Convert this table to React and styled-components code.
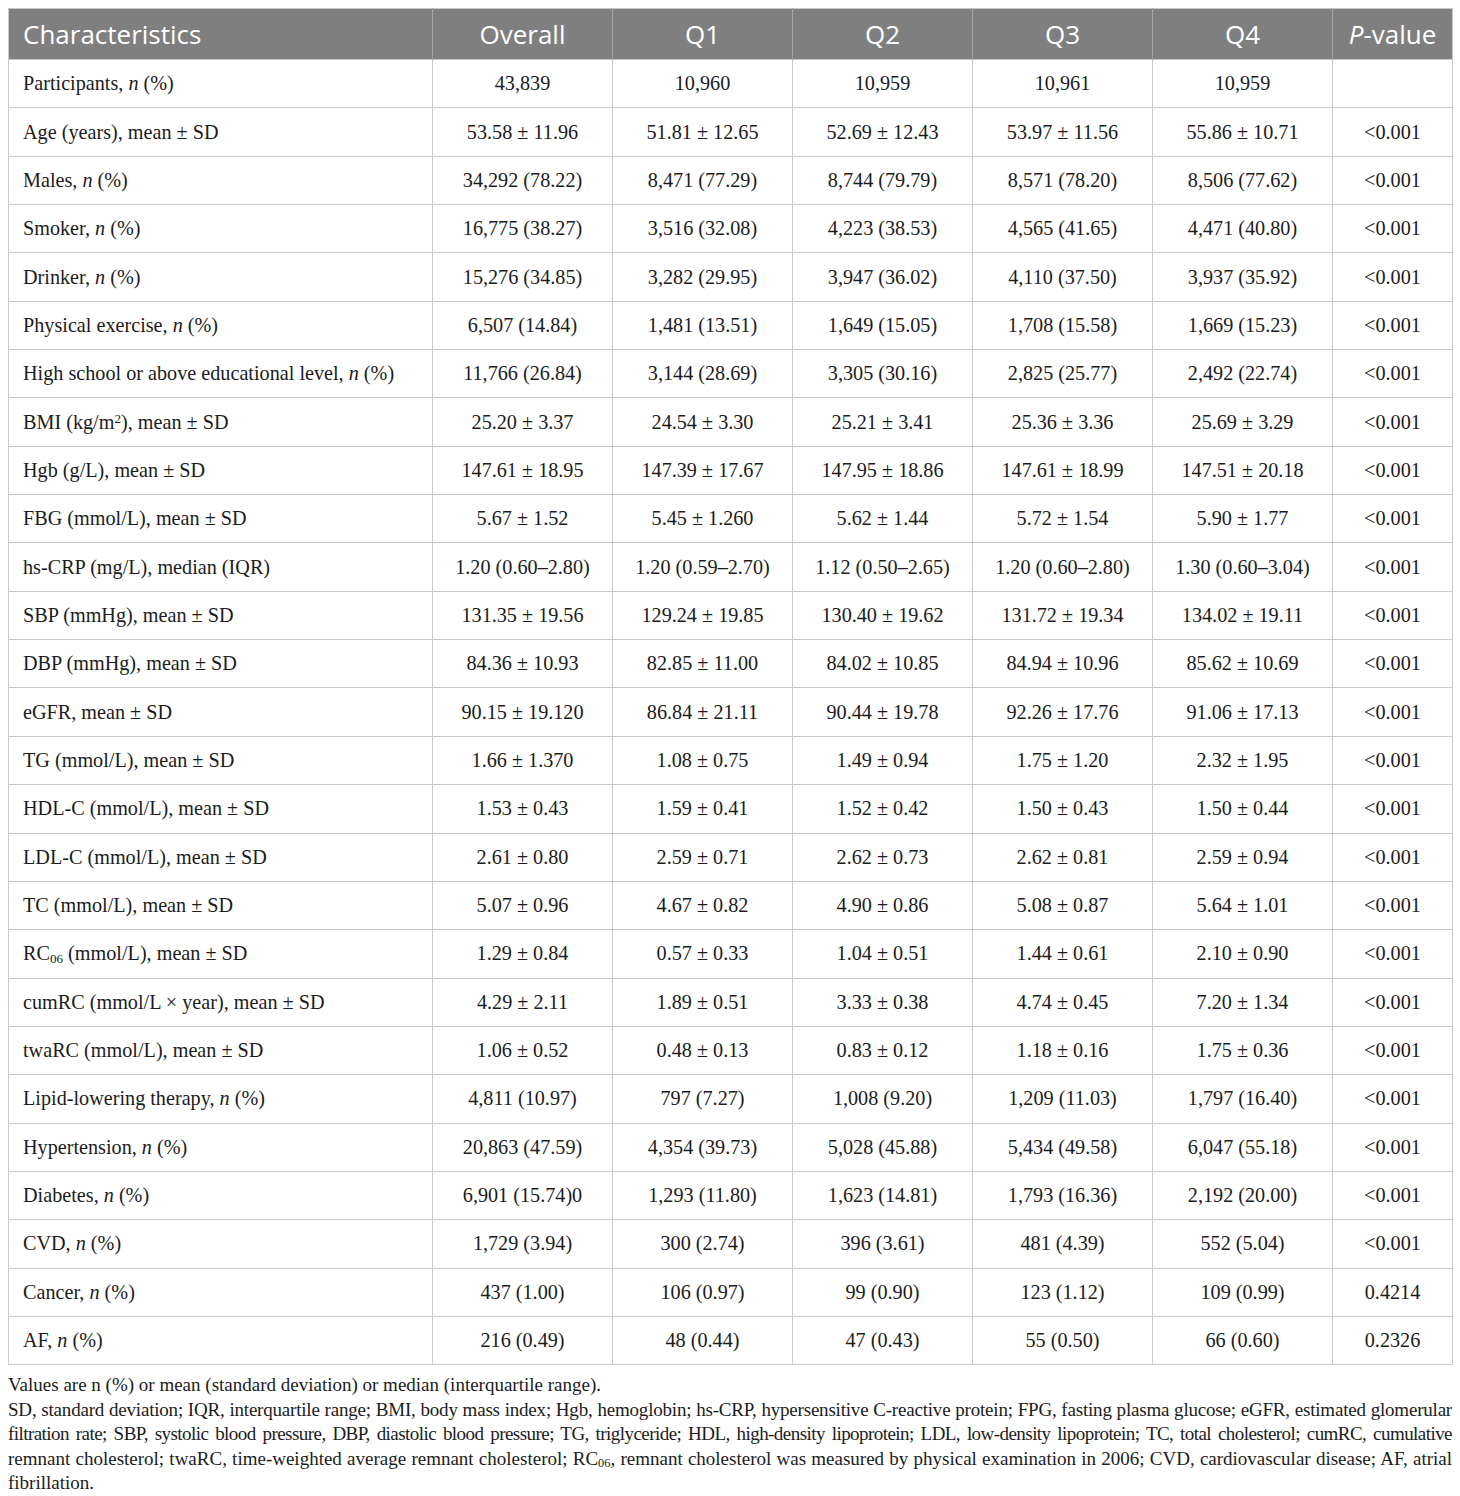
import React from "react";
import styled, { createGlobalStyle } from "styled-components";

const Global = createGlobalStyle`
  html, body { margin: 0; padding: 0; background: #fff; }
  body { font-family: "Liberation Serif", "Times New Roman", serif; color: #1c1c1c; }
`;

const Page = styled.div`
  padding: 8px;
  width: 1444px;
`;

const Table = styled.table`
  width: 1444px;
  border-collapse: collapse;
  table-layout: fixed;
  border: 1px solid #c9c9c9;
`;

const HeadCell = styled.th`
  background: #7f7f7f;
  color: #fff;
  font-family: "Open Sans", "Noto Sans", sans-serif;
  font-weight: 400;
  font-size: 26px;
  height: 51px;
  padding: 0 14px;
  text-align: ${(p) => (p.$left ? "left" : "center")};
  border-left: 1px solid #a6a6a6;
  vertical-align: middle;
  box-sizing: border-box;
  &:first-child { border-left: 1px solid #c9c9c9; }
`;

const Row = styled.tr`
  height: 48.35px;
`;

const Cell = styled.td`
  font-size: 20.2px;
  padding: 0 14px;
  text-align: ${(p) => (p.$left ? "left" : "center")};
  border: 1px solid #c9c9c9;
  vertical-align: middle;
  white-space: nowrap;
  color: #1c1c1c;
`;

const Sub = styled.sub`
  font-size: 0.65em;
  vertical-align: -0.2em;
  line-height: 0;
`;
const Sup = styled.sup`
  font-size: 0.65em;
  vertical-align: 0.45em;
  line-height: 0;
`;

const Notes = styled.div`
  margin-top: 8px;
  font-size: 19px;
  line-height: 24.5px;
  color: #1c1c1c;
`;

const NoteLine = styled.div`
  text-align: ${(p) => (p.$justify ? "justify" : "left")};
  text-align-last: ${(p) => (p.$justify ? "justify" : "left")};
  letter-spacing: ${(p) => p.$spacing || "0"};
  white-space: ${(p) => (p.$justify ? "normal" : "nowrap")};
`;

const n = <i>n</i>;

const rows = [
  [<>Participants, {n} (%)</>, "43,839", "10,960", "10,959", "10,961", "10,959", ""],
  ["Age (years), mean ± SD", "53.58 ± 11.96", "51.81 ± 12.65", "52.69 ± 12.43", "53.97 ± 11.56", "55.86 ± 10.71", "<0.001"],
  [<>Males, {n} (%)</>, "34,292 (78.22)", "8,471 (77.29)", "8,744 (79.79)", "8,571 (78.20)", "8,506 (77.62)", "<0.001"],
  [<>Smoker, {n} (%)</>, "16,775 (38.27)", "3,516 (32.08)", "4,223 (38.53)", "4,565 (41.65)", "4,471 (40.80)", "<0.001"],
  [<>Drinker, {n} (%)</>, "15,276 (34.85)", "3,282 (29.95)", "3,947 (36.02)", "4,110 (37.50)", "3,937 (35.92)", "<0.001"],
  [<>Physical exercise, {n} (%)</>, "6,507 (14.84)", "1,481 (13.51)", "1,649 (15.05)", "1,708 (15.58)", "1,669 (15.23)", "<0.001"],
  [<>High school or above educational level, {n} (%)</>, "11,766 (26.84)", "3,144 (28.69)", "3,305 (30.16)", "2,825 (25.77)", "2,492 (22.74)", "<0.001"],
  [<>BMI (kg/m<Sup>2</Sup>), mean ± SD</>, "25.20 ± 3.37", "24.54 ± 3.30", "25.21 ± 3.41", "25.36 ± 3.36", "25.69 ± 3.29", "<0.001"],
  ["Hgb (g/L), mean ± SD", "147.61 ± 18.95", "147.39 ± 17.67", "147.95 ± 18.86", "147.61 ± 18.99", "147.51 ± 20.18", "<0.001"],
  ["FBG (mmol/L), mean ± SD", "5.67 ± 1.52", "5.45 ± 1.260", "5.62 ± 1.44", "5.72 ± 1.54", "5.90 ± 1.77", "<0.001"],
  ["hs-CRP (mg/L), median (IQR)", "1.20 (0.60–2.80)", "1.20 (0.59–2.70)", "1.12 (0.50–2.65)", "1.20 (0.60–2.80)", "1.30 (0.60–3.04)", "<0.001"],
  ["SBP (mmHg), mean ± SD", "131.35 ± 19.56", "129.24 ± 19.85", "130.40 ± 19.62", "131.72 ± 19.34", "134.02 ± 19.11", "<0.001"],
  ["DBP (mmHg), mean ± SD", "84.36 ± 10.93", "82.85 ± 11.00", "84.02 ± 10.85", "84.94 ± 10.96", "85.62 ± 10.69", "<0.001"],
  ["eGFR, mean ± SD", "90.15 ± 19.120", "86.84 ± 21.11", "90.44 ± 19.78", "92.26 ± 17.76", "91.06 ± 17.13", "<0.001"],
  ["TG (mmol/L), mean ± SD", "1.66 ± 1.370", "1.08 ± 0.75", "1.49 ± 0.94", "1.75 ± 1.20", "2.32 ± 1.95", "<0.001"],
  ["HDL-C (mmol/L), mean ± SD", "1.53 ± 0.43", "1.59 ± 0.41", "1.52 ± 0.42", "1.50 ± 0.43", "1.50 ± 0.44", "<0.001"],
  ["LDL-C (mmol/L), mean ± SD", "2.61 ± 0.80", "2.59 ± 0.71", "2.62 ± 0.73", "2.62 ± 0.81", "2.59 ± 0.94", "<0.001"],
  ["TC (mmol/L), mean ± SD", "5.07 ± 0.96", "4.67 ± 0.82", "4.90 ± 0.86", "5.08 ± 0.87", "5.64 ± 1.01", "<0.001"],
  [<>RC<Sub>06</Sub> (mmol/L), mean ± SD</>, "1.29 ± 0.84", "0.57 ± 0.33", "1.04 ± 0.51", "1.44 ± 0.61", "2.10 ± 0.90", "<0.001"],
  ["cumRC (mmol/L × year), mean ± SD", "4.29 ± 2.11", "1.89 ± 0.51", "3.33 ± 0.38", "4.74 ± 0.45", "7.20 ± 1.34", "<0.001"],
  ["twaRC (mmol/L), mean ± SD", "1.06 ± 0.52", "0.48 ± 0.13", "0.83 ± 0.12", "1.18 ± 0.16", "1.75 ± 0.36", "<0.001"],
  [<>Lipid-lowering therapy, {n} (%)</>, "4,811 (10.97)", "797 (7.27)", "1,008 (9.20)", "1,209 (11.03)", "1,797 (16.40)", "<0.001"],
  [<>Hypertension, {n} (%)</>, "20,863 (47.59)", "4,354 (39.73)", "5,028 (45.88)", "5,434 (49.58)", "6,047 (55.18)", "<0.001"],
  [<>Diabetes, {n} (%)</>, "6,901 (15.74)0", "1,293 (11.80)", "1,623 (14.81)", "1,793 (16.36)", "2,192 (20.00)", "<0.001"],
  [<>CVD, {n} (%)</>, "1,729 (3.94)", "300 (2.74)", "396 (3.61)", "481 (4.39)", "552 (5.04)", "<0.001"],
  [<>Cancer, {n} (%)</>, "437 (1.00)", "106 (0.97)", "99 (0.90)", "123 (1.12)", "109 (0.99)", "0.4214"],
  [<>AF, {n} (%)</>, "216 (0.49)", "48 (0.44)", "47 (0.43)", "55 (0.50)", "66 (0.60)", "0.2326"],
];

const widths = [424, 180, 180, 180, 180, 180, 120];

export default function App() {
  return (
    <Page>
      <Global />
      <Table>
        <colgroup>
          {widths.map((w, i) => (
            <col key={i} style={{ width: w }} />
          ))}
        </colgroup>
        <thead>
          <tr>
            <HeadCell $left>Characteristics</HeadCell>
            <HeadCell>Overall</HeadCell>
            <HeadCell>Q1</HeadCell>
            <HeadCell>Q2</HeadCell>
            <HeadCell>Q3</HeadCell>
            <HeadCell>Q4</HeadCell>
            <HeadCell><i>P</i>-value</HeadCell>
          </tr>
        </thead>
        <tbody>
          {rows.map((r, i) => (
            <Row key={i}>
              {r.map((c, j) => (
                <Cell key={j} $left={j === 0}>{c}</Cell>
              ))}
            </Row>
          ))}
        </tbody>
      </Table>
      <Notes>
        <NoteLine>Values are n (%) or mean (standard deviation) or median (interquartile range).</NoteLine>
        <NoteLine $justify $spacing="-0.2px">SD, standard deviation; IQR, interquartile range; BMI, body mass index; Hgb, hemoglobin; hs-CRP, hypersensitive C-reactive protein; FPG, fasting plasma glucose; eGFR, estimated glomerular</NoteLine>
        <NoteLine $justify $spacing="-0.55px">filtration rate; SBP, systolic blood pressure, DBP, diastolic blood pressure; TG, triglyceride; HDL, high-density lipoprotein; LDL, low-density lipoprotein; TC, total cholesterol; cumRC, cumulative</NoteLine>
        <NoteLine $justify>remnant cholesterol; twaRC, time-weighted average remnant cholesterol; RC<Sub>06</Sub>, remnant cholesterol was measured by physical examination in 2006; CVD, cardiovascular disease; AF, atrial</NoteLine>
        <NoteLine>fibrillation.</NoteLine>
      </Notes>
    </Page>
  );
}
